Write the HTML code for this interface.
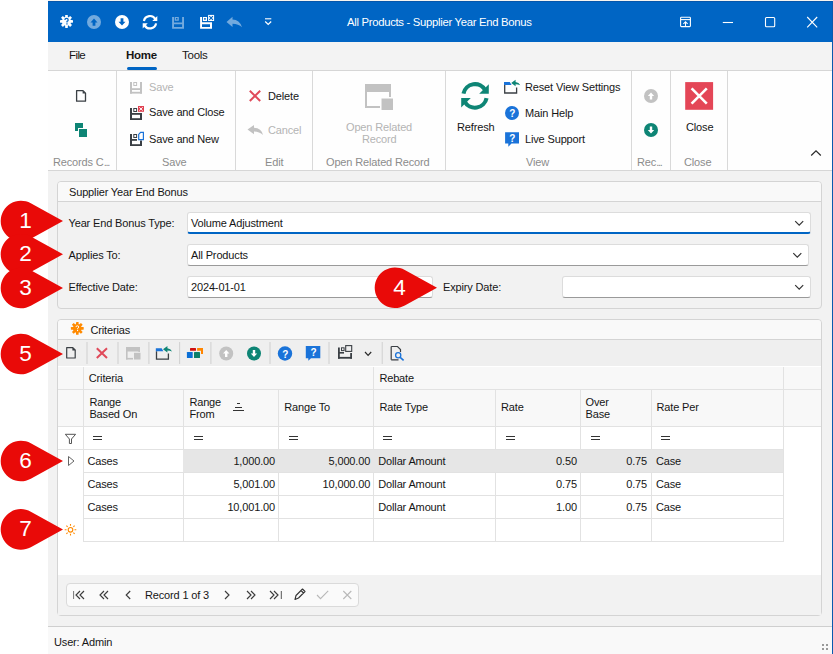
<!DOCTYPE html>
<html><head><meta charset="utf-8">
<style>
*{box-sizing:border-box;margin:0;padding:0}
html,body{width:833px;height:654px;overflow:hidden;background:#fff}
body{position:relative;font-family:"Liberation Sans",sans-serif;font-size:11px;color:#1f1f1f}
.a{position:absolute}
.t{position:absolute;font-size:11px;line-height:13px;letter-spacing:-0.15px;white-space:nowrap;color:#161616}
.g{color:#9a9a9a}
.gl{color:#8c8c8c}
svg{position:absolute;overflow:visible}
</style></head><body>
<!-- top background strip -->
<div class="a" style="left:48px;top:0;width:785px;height:1px;background:#f7f4f0"></div>

<!-- window -->
<div class="a" style="left:48px;top:1px;width:785px;height:653px;background:#f2f2f2"></div>

<!-- title bar -->
<div class="a" style="left:48px;top:1px;width:785px;height:41px;background:#0065c4"></div>
<div class="a" style="left:48px;top:1px;width:785px;height:1px;background:#0656ab"></div>
<div class="t" style="left:347px;top:16px;color:#fff;font-size:11.3px;letter-spacing:-0.3px">All Products - Supplier Year End Bonus</div>


<!-- title bar icons -->
<svg style="left:0;top:0" width="833" height="42" viewBox="0 0 833 42">
 <g fill="#fff">
  <g transform="translate(66.5 21.4)">
   <circle r="4.5"/>
   <rect x="-1.35" y="-6.5" width="2.7" height="3.5" rx="0.4"/>
   <rect transform="rotate(45)" x="-1.35" y="-6.5" width="2.7" height="3.5" rx="0.4"/><rect transform="rotate(90)" x="-1.35" y="-6.5" width="2.7" height="3.5" rx="0.4"/><rect transform="rotate(135)" x="-1.35" y="-6.5" width="2.7" height="3.5" rx="0.4"/>
   <rect transform="rotate(180)" x="-1.35" y="-6.5" width="2.7" height="3.5" rx="0.4"/><rect transform="rotate(225)" x="-1.35" y="-6.5" width="2.7" height="3.5" rx="0.4"/><rect transform="rotate(270)" x="-1.35" y="-6.5" width="2.7" height="3.5" rx="0.4"/><rect transform="rotate(315)" x="-1.35" y="-6.5" width="2.7" height="3.5" rx="0.4"/>
   <path d="M-1.6 -1.4 Q-1.6 -3 0 -3 Q1.7 -3 1.7 -1.5 Q1.7 -0.5 0.5 0 L0.5 1.1" fill="none" stroke="#0065c4" stroke-width="1.2"/>
   <rect x="-0.2" y="1.9" width="1.3" height="1.2" fill="#0065c4"/>
  </g>
  <circle cx="94" cy="22" r="7" fill="#fff" fill-opacity="0.45"/>
  <path d="M94 18.6 L97.5 22.4 L95.4 22.4 L95.4 25.8 L92.6 25.8 L92.6 22.4 L90.5 22.4 Z" fill="#0065c4"/>
  <circle cx="122" cy="22" r="7"/>
  <path d="M122 25.6 L118.5 21.8 L120.6 21.8 L120.6 18.2 L123.4 18.2 L123.4 21.8 L125.5 21.8 Z" fill="#0065c4"/>
 </g>
 <g fill="none" stroke="#fff" stroke-width="2.2">
  <path d="M143.91 21.04 A6.2 6.2 0 0 1 155.47 19.29"/>
  <path d="M156.09 23.36 A6.2 6.2 0 0 1 144.53 25.11"/>
 </g>
 <path d="M157.30 16.01 L157.30 21.04 L152.22 21.04 Z M142.70 28.39 L142.70 23.36 L147.78 23.36 Z" fill="#fff"/>
 <path fill="#fff" fill-opacity="0.45" fill-rule="evenodd" d="M172.1 17.1 H174 V22.5 H182.1 V17.1 H184 V28.8 H172.1 Z M174 24.3 V27 H182.1 V24.3 Z"/>
 <path fill="#fff" fill-opacity="0.45" fill-rule="evenodd" d="M174.7 16.9 H178.8 V20.7 H174.7 Z M176 18 V19.6 H177.5 V18 Z"/>
 <path fill="#fff" fill-rule="evenodd" d="M200.1 17.1 H202 V22.2 H212 V28.8 H200.1 Z M202 24.2 V27 H210 V24.2 Z"/>
 <path fill="#fff" fill-rule="evenodd" d="M202.9 16.9 H207 V20.9 H202.9 Z M204.2 18 V19.8 H205.7 V18 Z"/>
 <rect x="208.1" y="14.9" width="6" height="6.1" fill="#fff"/>
 <path d="M209.3 16.1 L212.9 19.8 M212.9 16.1 L209.3 19.8" stroke="#0065c4" stroke-width="1.1"/>
 <path d="M226.5 22 L232.5 16.8 L232.5 19.6 Q239.5 19.6 242 27.3 Q238.5 23.8 232.5 23.8 L232.5 27 Z" fill="#fff" fill-opacity="0.45"/>
 <path d="M265 18.8 L271.3 18.8" stroke="#fff" stroke-width="1.1"/>
 <path d="M265.2 21.5 L268.2 24.5 L271.2 21.5" fill="none" stroke="#fff" stroke-width="1.2"/>
 <!-- window controls -->
 <g fill="none" stroke="#fff" stroke-width="1.1">
  <rect x="680.6" y="17.2" width="9.8" height="9.4" rx="0.8"/>
  <path d="M680.6 19.6 L690.4 19.6"/>
  <path d="M685.5 26.6 L685.5 21.8 M683.4 23.8 L685.5 21.7 L687.6 23.8"/>
  <path d="M722.8 22.5 L733 22.5"/>
  <rect x="765.5" y="17.5" width="9.2" height="9.2" rx="1"/>
  <path d="M807.2 17 L817.2 27.4 M817.2 17 L807.2 27.4"/>
 </g>
</svg>

<!-- tab bar -->
<div class="a" style="left:48px;top:42px;width:784px;height:29px;background:#f3f3f3;border-bottom:1px solid #d6d6d6"></div>
<div class="t" style="left:69px;top:49px;font-size:11.5px;letter-spacing:-0.6px">File</div>
<div class="t" style="left:126px;top:49px;font-size:11.5px;font-weight:bold;letter-spacing:-0.3px">Home</div>
<div class="a" style="left:127px;top:67px;width:30px;height:3px;border-radius:2px;background:#0065c4"></div>
<div class="t" style="left:182px;top:49px;font-size:11.5px;letter-spacing:-0.25px">Tools</div>

<!-- ribbon -->
<div class="a" style="left:48px;top:71px;width:784px;height:100px;background:#fefefe;border-bottom:1px solid #d6d6d6"></div>
<div class="a" style="left:116px;top:71px;width:1px;height:99px;background:#d9d9d9"></div>
<div class="a" style="left:235px;top:71px;width:1px;height:99px;background:#d9d9d9"></div>
<div class="a" style="left:312px;top:71px;width:1px;height:99px;background:#d9d9d9"></div>
<div class="a" style="left:445px;top:71px;width:1px;height:99px;background:#d9d9d9"></div>
<div class="a" style="left:631px;top:71px;width:1px;height:99px;background:#d9d9d9"></div>
<div class="a" style="left:670px;top:71px;width:1px;height:99px;background:#d9d9d9"></div>
<div class="a" style="left:727px;top:71px;width:1px;height:99px;background:#d9d9d9"></div>


<!-- ribbon icons -->
<svg style="left:0;top:0" width="833" height="171" viewBox="0 0 833 171">
 <!-- new doc -->
 <path d="M76.6 90.6 L83 90.6 L85.5 93.1 L85.5 101.2 L76.6 101.2 Z" fill="none" stroke="#3a3f44" stroke-width="1.3" stroke-linejoin="round"/>
 <path d="M82.6 90.3 L85.8 93.5 L82.6 93.5 Z" fill="#3a3f44"/>
 <!-- copy squares -->
 <rect x="75" y="123" width="8" height="8" fill="#0e8575"/>
 <rect x="78" y="128" width="10" height="10" fill="#fefefe"/>
 <rect x="79" y="129" width="8" height="8" fill="#0e8575"/>
 <!-- save disabled -->
 <g fill="#c2c2c2">
  <rect x="130" y="82" width="2" height="11.6"/><rect x="140" y="82" width="2" height="11.6"/>
  <rect x="130" y="91.8" width="12" height="1.8"/><rect x="130" y="88.2" width="12" height="1.8"/>
 </g>
 <rect x="133.8" y="82.5" width="2.8" height="3" fill="none" stroke="#c2c2c2" stroke-width="1"/>
 <!-- save and close -->
 <g fill="#3a3f44">
  <rect x="130" y="108" width="2" height="12"/><rect x="140" y="113" width="2" height="7"/>
  <rect x="130" y="118.2" width="12" height="1.8"/><rect x="130" y="113" width="12" height="1.8"/>
 </g>
 <rect x="133.8" y="108.5" width="2.8" height="3" fill="none" stroke="#3a3f44" stroke-width="1"/>
 <rect x="138" y="106" width="6" height="5.8" fill="#e04050"/>
 <path d="M139.3 107.3 L142.7 110.5 M142.7 107.3 L139.3 110.5" stroke="#fff" stroke-width="1"/>
 <!-- save and new -->
 <g fill="#3a3f44">
  <rect x="130" y="134" width="2" height="12"/><rect x="140" y="140.5" width="2" height="5.5"/>
  <rect x="130" y="144.2" width="12" height="1.8"/><rect x="130" y="139" width="7" height="1.8"/>
 </g>
 <rect x="133.8" y="134.5" width="2.8" height="3" fill="none" stroke="#3a3f44" stroke-width="1"/>
 <path d="M138.7 134.3 L140.6 132.4 L143.4 132.4 L143.4 139.6 L138.7 139.6 Z" fill="none" stroke="#1a73d9" stroke-width="1.2"/>
 <!-- delete X -->
 <path d="M249.8 90.8 L260.2 101 M260.2 90.8 L249.8 101" stroke="#e04a5a" stroke-width="2"/>
 <!-- cancel arrow -->
 <path d="M247.5 129.5 L254 125 L254 127.7 Q261.5 128 263 135 Q259.5 131.5 254 131.5 L254 134.3 Z" fill="#c2c2c2"/>
 <!-- open related record -->
 <g fill="#c2c2c2">
  <rect x="365" y="84" width="26" height="8"/>
  <rect x="365" y="84" width="2" height="24"/>
  <rect x="365" y="106" width="15" height="2"/>
  <rect x="389" y="84" width="2" height="13"/>
  <rect x="381.3" y="98.3" width="11.7" height="11.7"/>
 </g>
 <rect x="380" y="97" width="14" height="1.3" fill="#fefefe"/>
 <rect x="380" y="97" width="1.3" height="13" fill="#fefefe"/>
 <!-- refresh big -->
 <g fill="none" stroke="#0e8575" stroke-width="4.1">
  <path d="M463.46 93.70 A11.75 11.75 0 0 1 485.37 90.38"/>
  <path d="M486.54 98.10 A11.75 11.75 0 0 1 464.63 101.42"/>
 </g>
 <path d="M488.8 84.2 L488.8 93.7 L479.2 93.7 Z M461.2 107.6 L461.2 98.1 L470.8 98.1 Z" fill="#0e8575"/>
 <!-- reset view settings -->
 <g transform="translate(0 0)">
 <path d="M504.7 85 L504.7 93 L516.6 93 L516.6 87.4" fill="none" stroke="#3a3f44" stroke-width="1.3"/>
 <path d="M504 82 L509.8 82 L511.6 85 L504 85 Z" fill="#1a73d9"/>
 <path d="M511.2 83 L515.6 79.8 L515.6 82 Q519 82.3 520.3 85.2 Q518 84.2 515.6 84.2 L515.6 86.3 Z" fill="#0e8575"/>
 </g>
<!-- main help -->
 <circle cx="512" cy="113" r="7" fill="#1a73d9"/>
 <!-- live support -->
 <path d="M505.1 132.3 L519 132.3 L519 143.6 L511.5 143.6 L508.3 146.8 L508.3 143.6 L505.1 143.6 Z" fill="#1a73d9"/>
 <!-- rec up/down -->
 <circle cx="651" cy="96" r="7" fill="#c2c2c2"/>
 <path d="M651 92.5 L654.2 96 L652.2 96 L652.2 99.4 L649.8 99.4 L649.8 96 L647.8 96 Z" fill="#fff"/>
 <circle cx="651" cy="130" r="7" fill="#0e8575"/>
 <path d="M651 133.5 L647.8 130 L649.8 130 L649.8 126.6 L652.2 126.6 L652.2 130 L654.2 130 Z" fill="#fff"/>
 <!-- close -->
 <rect x="685.2" y="82.1" width="27.9" height="27.7" fill="#e44657"/>
 <path d="M691.6 88.3 L706.8 103.6 M706.8 88.3 L691.6 103.6" stroke="#fff" stroke-width="2.6"/>
 <!-- collapse chevron -->
 <path d="M811.2 155.5 L816 150.8 L820.8 155.5" fill="none" stroke="#2a2a2a" stroke-width="1.2"/>
</svg>
<div class="t" style="left:509.3px;top:107px;color:#fff;font-weight:bold;font-size:10px">?</div>
<div class="t" style="left:509.3px;top:132px;color:#fff;font-weight:bold;font-size:10px">?</div>

<div class="t gl" style="left:53px;top:155.5px">Records C<span style="letter-spacing:-1.2px">...</span></div>
<div class="t gl" style="left:162px;top:155.5px">Save</div>
<div class="t gl" style="left:265px;top:155.5px">Edit</div>
<div class="t gl" style="left:326px;top:155.5px">Open Related Record</div>
<div class="t gl" style="left:526px;top:155.5px">View</div>
<div class="t gl" style="left:637px;top:155.5px">Rec<span style="letter-spacing:-1.2px">...</span></div>
<div class="t gl" style="left:684px;top:155.5px">Close</div>

<div class="t g" style="left:149px;top:80.5px;color:#b4b4b4">Save</div>
<div class="t" style="left:149px;top:106px">Save and Close</div>
<div class="t" style="left:149px;top:132.5px">Save and New</div>
<div class="t" style="left:268px;top:89.5px">Delete</div>
<div class="t" style="left:268px;top:123.5px;color:#b4b4b4">Cancel</div>
<div class="t" style="left:346px;top:120.5px;color:#b4b4b4">Open Related</div>
<div class="t" style="left:362px;top:133px;color:#b4b4b4">Record</div>
<div class="t" style="left:457px;top:120.5px">Refresh</div>
<div class="t" style="left:525px;top:80.5px">Reset View Settings</div>
<div class="t" style="left:525px;top:106.5px">Main Help</div>
<div class="t" style="left:525px;top:132.5px">Live Support</div>
<div class="t" style="left:686px;top:120.5px">Close</div>

<!-- group 1 -->
<div class="a" style="left:57px;top:181px;width:765px;height:128px;background:#f2f2f2;border:1px solid #d4d4d4;border-radius:4px"></div>
<div class="a" style="left:58px;top:182px;width:763px;height:20px;background:#f9f9f9;border-radius:3px 3px 0 0;border-bottom:1px solid #d4d4d4"></div>
<div class="t" style="left:69px;top:185.8px">Supplier Year End Bonus</div>

<div class="t" style="left:68.5px;top:216.5px">Year End Bonus Type:</div>
<div class="t" style="left:68.5px;top:249px">Applies To:</div>
<div class="t" style="left:68.5px;top:281px">Effective Date:</div>
<div class="t" style="left:443px;top:281px">Expiry Date:</div>

<div class="a" style="left:187px;top:212px;width:624px;height:22px;background:#fff;border:1px solid #dcdcdc;border-bottom:2px solid #0065c4;border-radius:3px"></div>
<div class="a" style="left:187px;top:244px;width:622px;height:22px;background:#fff;border:1px solid #dcdcdc;border-bottom-color:#9a9a9a;border-radius:3px"></div>
<div class="a" style="left:187px;top:276px;width:246px;height:22px;background:#fff;border:1px solid #dcdcdc;border-bottom-color:#9a9a9a;border-radius:3px"></div>
<div class="a" style="left:562px;top:276px;width:249px;height:22px;background:#fff;border:1px solid #dcdcdc;border-bottom-color:#9a9a9a;border-radius:3px"></div>
<div class="t" style="left:191px;top:216.5px">Volume Adjustment</div>
<div class="t" style="left:191px;top:249px">All Products</div>
<div class="t" style="left:191px;top:281px">2024-01-01</div>

<svg style="left:0;top:200px" width="833" height="100" viewBox="0 200 833 100"><g fill="none" stroke="#333" stroke-width="1.2">
<path d="M795.2 221.2 L799.2 225.2 L803.2 221.2"/>
<path d="M793.3 253.2 L797.3 257.2 L801.3 253.2"/>
<path d="M795.2 285.2 L799.2 289.2 L803.2 285.2"/>
</g></svg>
<!-- group 2 -->
<div class="a" style="left:57px;top:319px;width:765px;height:297px;background:#f2f2f2;border:1px solid #d4d4d4;border-radius:4px"></div>
<div class="a" style="left:58px;top:320px;width:763px;height:20px;background:#f9f9f9;border-radius:3px 3px 0 0;border-bottom:1px solid #d4d4d4"></div>
<div class="t" style="left:90.5px;top:324px">Criterias</div>
<div class="a" style="left:58px;top:340px;width:763px;height:27px;background:#efefef;border-bottom:1px solid #d4d4d4"></div>

<!-- grid -->
<div class="a" style="left:58px;top:366px;width:763px;height:209px;background:#fff"></div>


<svg style="left:0;top:300px" width="833" height="80" viewBox="0 300 833 80">
 <g transform="translate(77.3 328.4)" fill="#ff8a00">
  <circle r="4.3"/>
  <rect x="-1.3" y="-6.4" width="2.6" height="3.4" rx="0.4"/>
  <rect transform="rotate(45)" x="-1.3" y="-6.4" width="2.6" height="3.4" rx="0.4"/><rect transform="rotate(90)" x="-1.3" y="-6.4" width="2.6" height="3.4" rx="0.4"/><rect transform="rotate(135)" x="-1.3" y="-6.4" width="2.6" height="3.4" rx="0.4"/>
  <rect transform="rotate(180)" x="-1.3" y="-6.4" width="2.6" height="3.4" rx="0.4"/><rect transform="rotate(225)" x="-1.3" y="-6.4" width="2.6" height="3.4" rx="0.4"/><rect transform="rotate(270)" x="-1.3" y="-6.4" width="2.6" height="3.4" rx="0.4"/><rect transform="rotate(315)" x="-1.3" y="-6.4" width="2.6" height="3.4" rx="0.4"/>
  <path d="M-1.3 -1.3 Q-1.3 -2.6 0 -2.6 Q1.4 -2.6 1.4 -1.4 Q1.4 -0.5 0.3 0 L0.3 0.9" fill="none" stroke="#fff" stroke-width="1"/>
  <rect x="-0.3" y="1.6" width="1.1" height="1.1" fill="#fff"/>
 </g>
 <!-- separators -->
 <g fill="#d0d0d0">
  <rect x="86.5" y="342" width="1" height="22"/><rect x="117.5" y="342" width="1" height="22"/>
  <rect x="148.4" y="342" width="1" height="22"/><rect x="179.1" y="342" width="1" height="22"/>
  <rect x="210.4" y="342" width="1" height="22"/><rect x="269.5" y="342" width="1" height="22"/>
  <rect x="328.5" y="342" width="1" height="22"/><rect x="381.7" y="342" width="1" height="22"/>
 </g>
 <!-- new doc -->
 <path d="M66.7 347.6 L72.8 347.6 L75.2 350 L75.2 358 L66.7 358 Z" fill="none" stroke="#3a3f44" stroke-width="1.2" stroke-linejoin="round"/>
 <path d="M72.4 347.3 L75.5 350.4 L72.4 350.4 Z" fill="#3a3f44"/>
 <!-- delete x -->
 <path d="M96.8 348.2 L107 358 M107 348.2 L96.8 358" stroke="#e04a5a" stroke-width="2"/>
 <!-- disabled window -->
 <g fill="#c2c2c2">
  <rect x="126" y="347" width="14" height="4.5"/><rect x="126" y="347" width="1.6" height="12.5"/>
  <rect x="126" y="357.9" width="7" height="1.6"/><rect x="138.4" y="347" width="1.6" height="5"/>
  <rect x="134" y="352.8" width="6.5" height="6.7"/>
 </g>
 <!-- reset view -->
 <g transform="translate(-348.2 266.2)">
 <path d="M504.7 85 L504.7 93 L516.6 93 L516.6 87.4" fill="none" stroke="#3a3f44" stroke-width="1.3"/>
 <path d="M504 82 L509.8 82 L511.6 85 L504 85 Z" fill="#1a73d9"/>
 <path d="M511.2 83 L515.6 79.8 L515.6 82 Q519 82.3 520.3 85.2 Q518 84.2 515.6 84.2 L515.6 86.3 Z" fill="#0e8575"/>
 </g>
<!-- colored blocks -->
 <rect x="186.9" y="352" width="5.8" height="6" rx="0.6" fill="#0a6fd6"/>
 <rect x="194" y="352" width="6" height="6" rx="0.6" fill="#0c7f6a"/>
 <rect x="190" y="348" width="6" height="2.8" rx="0.5" fill="#d01010"/>
 <path d="M197.1 348 L203 348 L203 353.9 L201 353.9 L201 350.8 L197.1 350.8 Z" fill="#ff8500"/>
 <!-- up/down -->
 <circle cx="226.2" cy="353.5" r="7" fill="#c2c2c2"/>
 <path d="M226.2 350 L229.4 353.5 L227.4 353.5 L227.4 357 L225 357 L225 353.5 L223 353.5 Z" fill="#fff"/>
 <circle cx="254" cy="353.5" r="7" fill="#0e8575"/>
 <path d="M254 357 L250.8 353.5 L252.8 353.5 L252.8 350 L255.2 350 L255.2 353.5 L257.2 353.5 Z" fill="#fff"/>
 <!-- help -->
 <circle cx="285" cy="353.5" r="7.2" fill="#1a73d9"/>
 <path d="M305.8 345.9 L320.3 345.9 L320.3 358.3 L311 358.3 L308.3 360.8 L308.3 358.3 L305.8 358.3 Z" fill="#1a73d9"/>
 <!-- layout save -->
 <g fill="#3a3f44">
  <rect x="338" y="347.5" width="1.8" height="11.2"/><rect x="338" y="356.9" width="14" height="1.8"/>
  <rect x="350.2" y="353" width="1.8" height="5.7"/><rect x="338" y="352" width="6" height="1.6"/>
 </g>
 <rect x="341.5" y="347.8" width="2.6" height="2.8" fill="none" stroke="#3a3f44" stroke-width="1"/>
 <rect x="345.7" y="345.6" width="6" height="5.8" fill="none" stroke="#3a3f44" stroke-width="1.1"/>
 <path d="M365 352 L368.1 355.3 L371.2 352" fill="none" stroke="#2a2a2a" stroke-width="1.2"/>
 <!-- preview -->
 <path d="M391.2 346.5 L397.5 346.5 L400.5 349.5 L400.5 352 M398.5 359.8 L391.2 359.8 Z" fill="none" stroke="#3a3f44" stroke-width="1.2"/>
 <path d="M391.2 346.5 L391.2 359.8" stroke="#3a3f44" stroke-width="1.2"/>
 <circle cx="398.2" cy="355.2" r="2.6" fill="none" stroke="#1a73d9" stroke-width="1.3"/>
 <path d="M400.2 357.3 L403.6 360.4" stroke="#1a73d9" stroke-width="1.6"/>
</svg>
<div class="t" style="left:282.3px;top:347.5px;color:#fff;font-weight:bold;font-size:10px">?</div>
<div class="t" style="left:310.5px;top:346px;color:#fff;font-weight:bold;font-size:10px">?</div>

<div class="a" style="left:58px;top:367px;width:763px;height:23px;background:#f8f8f8;border-bottom:1px solid #e2e2e2"></div>
<div class="a" style="left:58px;top:390px;width:763px;height:37px;background:#f8f8f8;border-bottom:1px solid #e2e2e2"></div>
<div class="a" style="left:83px;top:367px;width:1px;height:175px;background:#e2e2e2"></div>
<div class="a" style="left:373px;top:367px;width:1px;height:23px;background:#e2e2e2"></div>
<div class="a" style="left:783px;top:367px;width:1px;height:175px;background:#e2e2e2"></div>
<div class="a" style="left:183px;top:390px;width:1px;height:152px;background:#e2e2e2"></div>
<div class="a" style="left:278px;top:390px;width:1px;height:152px;background:#e2e2e2"></div>
<div class="a" style="left:373px;top:390px;width:1px;height:152px;background:#e2e2e2"></div>
<div class="a" style="left:495px;top:390px;width:1px;height:152px;background:#e2e2e2"></div>
<div class="a" style="left:580px;top:390px;width:1px;height:152px;background:#e2e2e2"></div>
<div class="a" style="left:651px;top:390px;width:1px;height:152px;background:#e2e2e2"></div>
<div class="a" style="left:83px;top:426px;width:701px;height:1px;background:#e2e2e2"></div>
<div class="a" style="left:58px;top:449px;width:726px;height:1px;background:#e2e2e2"></div>
<div class="a" style="left:183px;top:450px;width:600px;height:22px;background:#e6e6e6"></div>
<div class="a" style="left:83px;top:472px;width:701px;height:1px;background:#e2e2e2"></div>
<div class="a" style="left:83px;top:495px;width:701px;height:1px;background:#e2e2e2"></div>
<div class="a" style="left:83px;top:518px;width:701px;height:1px;background:#e2e2e2"></div>
<div class="a" style="left:83px;top:541px;width:701px;height:1px;background:#e2e2e2"></div>






<div class="t" style="left:88.8px;top:371.5px;">Criteria</div>
<div class="t" style="left:379.4px;top:371.5px;">Rebate</div>
<div class="t" style="left:89.4px;top:395.5px;">Range</div>
<div class="t" style="left:89.4px;top:408.3px;">Based On</div>
<div class="t" style="left:189.4px;top:395.5px;">Range</div>
<div class="t" style="left:189.4px;top:408.3px;">From</div>
<div class="t" style="left:284.3px;top:400.8px;">Range To</div>
<div class="t" style="left:379.4px;top:400.8px;">Rate Type</div>
<div class="t" style="left:501px;top:400.8px;">Rate</div>
<div class="t" style="left:585.5px;top:395.5px;">Over</div>
<div class="t" style="left:585.5px;top:408.3px;">Base</div>
<div class="t" style="left:656.5px;top:400.8px;">Rate Per</div>
<div class="a" style="left:237px;top:403.3px;width:3px;height:1px;background:#333"></div>
<div class="a" style="left:234.8px;top:406.8px;width:7.2px;height:1px;background:#333"></div>
<div class="a" style="left:233px;top:410.2px;width:10.8px;height:1.2px;background:#333"></div>
<svg style="left:0;top:420px" width="833" height="30" viewBox="0 420 833 30"><path d="M65.3 434.3 L75.6 434.3 L71.5 439 L71.5 443.5 L69.4 443.5 L69.4 439 Z" fill="none" stroke="#555" stroke-width="1" stroke-linejoin="round"/></svg>
<div class="a" style="left:93px;top:435.5px;width:9px;height:1.2px;background:#333"></div>
<div class="a" style="left:93px;top:439px;width:9px;height:1.2px;background:#333"></div>
<div class="a" style="left:194px;top:435.5px;width:9px;height:1.2px;background:#333"></div>
<div class="a" style="left:194px;top:439px;width:9px;height:1.2px;background:#333"></div>
<div class="a" style="left:289px;top:435.5px;width:9px;height:1.2px;background:#333"></div>
<div class="a" style="left:289px;top:439px;width:9px;height:1.2px;background:#333"></div>
<div class="a" style="left:383px;top:435.5px;width:9px;height:1.2px;background:#333"></div>
<div class="a" style="left:383px;top:439px;width:9px;height:1.2px;background:#333"></div>
<div class="a" style="left:506px;top:435.5px;width:9px;height:1.2px;background:#333"></div>
<div class="a" style="left:506px;top:439px;width:9px;height:1.2px;background:#333"></div>
<div class="a" style="left:591px;top:435.5px;width:9px;height:1.2px;background:#333"></div>
<div class="a" style="left:591px;top:439px;width:9px;height:1.2px;background:#333"></div>
<div class="a" style="left:661px;top:435.5px;width:9px;height:1.2px;background:#333"></div>
<div class="a" style="left:661px;top:439px;width:9px;height:1.2px;background:#333"></div>
<div class="t" style="left:87.4px;top:455.3px;">Cases</div>
<div class="t" style="left:183.5px;top:455.3px;width:91.5px;text-align:right">1,000.00</div>
<div class="t" style="left:278.7px;top:455.3px;width:91.5px;text-align:right">5,000.00</div>
<div class="t" style="left:378.3px;top:455.3px;">Dollar Amount</div>
<div class="t" style="left:495.4px;top:455.3px;width:81.5px;text-align:right">0.50</div>
<div class="t" style="left:580.5px;top:455.3px;width:66.5px;text-align:right">0.75</div>
<div class="t" style="left:656px;top:455.3px;">Case</div>
<div class="t" style="left:87.4px;top:478.3px;">Cases</div>
<div class="t" style="left:183.5px;top:478.3px;width:91.5px;text-align:right">5,001.00</div>
<div class="t" style="left:278.7px;top:478.3px;width:91.5px;text-align:right">10,000.00</div>
<div class="t" style="left:378.3px;top:478.3px;">Dollar Amount</div>
<div class="t" style="left:495.4px;top:478.3px;width:81.5px;text-align:right">0.75</div>
<div class="t" style="left:580.5px;top:478.3px;width:66.5px;text-align:right">0.75</div>
<div class="t" style="left:656px;top:478.3px;">Case</div>
<div class="t" style="left:87.4px;top:501.3px;">Cases</div>
<div class="t" style="left:183.5px;top:501.3px;width:91.5px;text-align:right">10,001.00</div>
<div class="t" style="left:278.7px;top:501.3px;width:91.5px;text-align:right"></div>
<div class="t" style="left:378.3px;top:501.3px;">Dollar Amount</div>
<div class="t" style="left:495.4px;top:501.3px;width:81.5px;text-align:right">1.00</div>
<div class="t" style="left:580.5px;top:501.3px;width:66.5px;text-align:right">0.75</div>
<div class="t" style="left:656px;top:501.3px;">Case</div>
<svg style="left:0;top:450px" width="833" height="95" viewBox="0 450 833 95"><path d="M68.5 456.5 L74 461 L68.5 465.5 Z" fill="none" stroke="#666" stroke-width="1" stroke-linejoin="round"/><g stroke="#ff8a00" stroke-width="1.1" fill="none"><circle cx="70.5" cy="529.8" r="2.3"/><path d="M70.5 524 L70.5 525.8 M70.5 533.8 L70.5 535.6 M64.7 529.8 L66.5 529.8 M74.5 529.8 L76.3 529.8 M66.4 525.7 L67.6 526.9 M73.4 532.7 L74.6 533.9 M74.6 525.7 L73.4 526.9 M67.6 532.7 L66.4 533.9"/></g></svg>

<div class="a" style="left:58px;top:575px;width:763px;height:40px;background:#f2f2f2"></div>
<div class="a" style="left:66px;top:583px;width:293px;height:23.5px;background:#fafafa;border:1px solid #dadada;border-radius:4px"></div>
<div class="t" style="left:145px;top:588.6px">Record 1 of 3</div>
<svg style="left:0;top:580px" width="833" height="30" viewBox="0 580 833 30">
 <g fill="none" stroke="#3c3c3c" stroke-width="1.15">
  <path d="M73.6 591 L73.6 599" stroke="#777" stroke-width="1"/>
  <path d="M80 591 L76 595 L80 599 M84 591 L80 595 L84 599"/>
  <path d="M104 591 L100 595 L104 599 M108 591 L104 595 L108 599"/>
  <path d="M130.2 591 L126.2 595 L130.2 599"/>
  <path d="M225 591 L229 595 L225 599"/>
  <path d="M247 591 L251 595 L247 599 M251 591 L255 595 L251 599"/>
  <path d="M270 591 L274 595 L270 599 M274 591 L278 595 L274 599"/>
  <path d="M281.3 591 L281.3 599" stroke="#555" stroke-width="1"/>
 </g>
 <path d="M295 599.5 L296 595.5 L302.5 589 L305 591.5 L298.5 598 Z M301 590.5 L303.5 593" fill="none" stroke="#333" stroke-width="1.1" stroke-linejoin="round"/>
 <path d="M317 595 L320.5 598.6 L328.2 590.8" fill="none" stroke="#b8b8b8" stroke-width="1.1"/>
 <path d="M343.3 591 L351.3 599 M351.3 591 L343.3 599" fill="none" stroke="#b8b8b8" stroke-width="1.1"/>
</svg>

<!-- status bar -->
<div class="a" style="left:48px;top:626px;width:784px;height:28px;background:#f9f9f9;border-top:1px solid #cfcfcf"></div>
<div class="t" style="left:54px;top:635.5px">User: Admin</div>

<div class="a" style="left:822px;top:644px;width:2px;height:2px;background:#9a9a9a"></div>
<div class="a" style="left:826px;top:644px;width:2px;height:2px;background:#9a9a9a"></div>
<div class="a" style="left:822px;top:648px;width:2px;height:2px;background:#9a9a9a"></div>
<div class="a" style="left:826px;top:648px;width:2px;height:2px;background:#9a9a9a"></div>
<!-- markers -->
<svg style="left:0;top:0" width="833" height="654" viewBox="0 0 833 654"><g fill="#e90a08">
<path d="M63.00 221.00 L30.81 203.23 A20.3 20.3 0 1 0 30.81 238.77 Z"/>
<path d="M63.00 254.20 L30.81 236.43 A20.3 20.3 0 1 0 30.81 271.97 Z"/>
<path d="M63.00 288.00 L30.81 270.23 A20.3 20.3 0 1 0 30.81 305.77 Z"/>
<path d="M437.00 287.70 L404.81 269.93 A20.3 20.3 0 1 0 404.81 305.47 Z"/>
<path d="M63.00 354.00 L30.81 336.23 A20.3 20.3 0 1 0 30.81 371.77 Z"/>
<path d="M63.00 461.00 L30.81 443.23 A20.3 20.3 0 1 0 30.81 478.77 Z"/>
<path d="M63.00 529.40 L30.81 511.63 A20.3 20.3 0 1 0 30.81 547.17 Z"/>
</g></svg>
<div class="a" style="left:10.5px;top:208px;width:30px;height:26px;line-height:26px;text-align:center;color:#fff;font-size:22.6px">1</div>
<div class="a" style="left:10.5px;top:241.2px;width:30px;height:26px;line-height:26px;text-align:center;color:#fff;font-size:22.6px">2</div>
<div class="a" style="left:10.5px;top:275px;width:30px;height:26px;line-height:26px;text-align:center;color:#fff;font-size:22.6px">3</div>
<div class="a" style="left:384.5px;top:274.7px;width:30px;height:26px;line-height:26px;text-align:center;color:#fff;font-size:22.6px">4</div>
<div class="a" style="left:10.5px;top:341px;width:30px;height:26px;line-height:26px;text-align:center;color:#fff;font-size:22.6px">5</div>
<div class="a" style="left:10.5px;top:448px;width:30px;height:26px;line-height:26px;text-align:center;color:#fff;font-size:22.6px">6</div>
<div class="a" style="left:10.5px;top:516.4px;width:30px;height:26px;line-height:26px;text-align:center;color:#fff;font-size:22.6px">7</div>
<!-- right blue border -->
<div class="a" style="left:832px;top:1px;width:1px;height:653px;background:#0a5aae"></div>

</body></html>
